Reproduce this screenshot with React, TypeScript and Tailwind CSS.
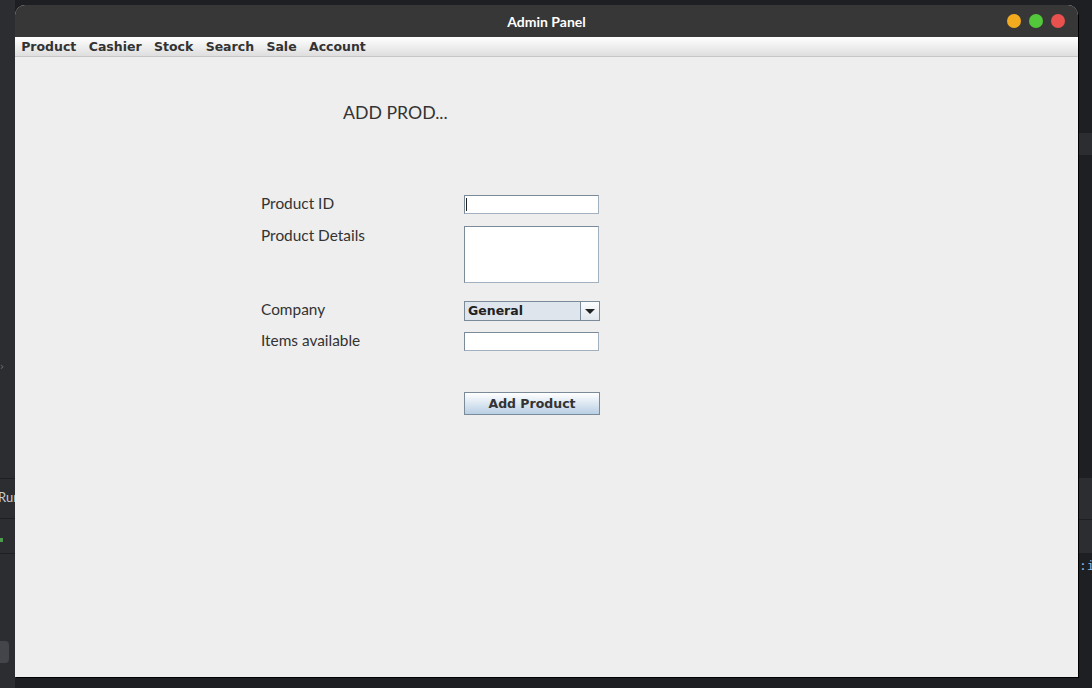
import React from "react";

const sans = { fontFamily: "Lato, 'Open Sans', sans-serif" };
const dejavu = { fontFamily: "'DejaVu Sans', sans-serif" };

function TextField({ h = 19, caret = false }: { h?: number; caret?: boolean }) {
  return (
    <div
      className="w-[135px] bg-white border border-[#7a8a99] border-b-[#a3b0bd] border-r-[#a3b0bd] relative"
      style={{ height: h }}
    >
      {caret && <div className="absolute left-[1px] top-[2px] w-[1px] h-[13px] bg-[#222]" />}
    </div>
  );
}

export default function App() {
  const menus = ["Product", "Cashier", "Stock", "Search", "Sale", "Account"];
  return (
    <div className="relative w-[1092px] h-[688px] bg-[#1e1f22] overflow-hidden">
      {/* IDE background pieces */}
      <div className="absolute left-0 top-0 w-[15px] h-[688px] bg-[#2b2d30] overflow-hidden">
        <div className="absolute left-0 top-[362px] text-[#6f737a] text-[10px] leading-none" style={dejavu}>›</div>
        <div className="absolute left-0 top-[478px] w-[15px] h-[1px] bg-[#1e1f22]" />
        <div className="absolute left-[-2px] top-[491px] text-[#c9ccd1] text-[13px] leading-none" style={sans}>Rur</div>
        <div className="absolute left-0 top-[518px] w-[15px] h-[1px] bg-[#1e1f22]" />
        <div className="absolute left-0 top-[538px] w-[3px] h-[4px] bg-[#4d9b4d]" />
        <div className="absolute left-0 top-[553px] w-[15px] h-[1px] bg-[#1e1f22]" />
        <div className="absolute left-0 top-[641px] w-[9px] h-[22px] rounded-r bg-[#43454a]" />
      </div>
      <div className="absolute left-[1078px] top-[133px] w-[14px] h-[22px] bg-[#2b2d30]" />
      <div className="absolute left-[1078px] top-[478px] w-[14px] h-[41px] bg-[#2b2d30]" />
      <div className="absolute left-[1078px] top-[520px] w-[14px] h-[33px] bg-[#2b2d30]" />
      <div className="absolute left-[1079px] top-[559px] text-[#8fb6e0] text-[13px] leading-none" style={{ fontFamily: "'DejaVu Sans Mono', monospace" }}>:i</div>

      {/* Window */}
      <div className="absolute left-[15px] top-[5px] w-[1063px] h-[672px] flex flex-col bg-[#eeeeee] rounded-t-[10px] overflow-hidden shadow-[1px_1px_0_#000]">
        <div className="h-[32px] bg-[#373737] relative flex items-center justify-center">
          <span className="text-white text-[14px] font-bold" style={sans}>Admin Panel</span>
          <div className="absolute right-[13px] top-[9px] flex gap-[8px]">
            <div className="w-[14px] h-[14px] rounded-full bg-[#f2ab1f]" />
            <div className="w-[14px] h-[14px] rounded-full bg-[#52c83a]" />
            <div className="w-[14px] h-[14px] rounded-full bg-[#e9514f]" />
          </div>
        </div>
        <div className="h-[20px] bg-gradient-to-b from-white to-[#dedede] border-b border-[#c6c6c6] flex items-center pt-[2px]">
          {menus.map((m) => (
            <span key={m} className="px-[6.2px] text-[12.5px] font-bold text-[#333] leading-none" style={dejavu}>
              {m}
            </span>
          ))}
        </div>
        <div className="flex-1 pl-[246px] pt-[46px]" style={sans}>
          <div className="ml-[82px] h-[20px] leading-[20px] text-[17.7px] text-[#333]">ADD PROD...</div>
          <div className="mt-[72px] flex items-center h-[19px]">
            <div className="w-[203px] text-[15.4px] text-[#333] -mt-[1px]">Product ID</div>
            <TextField caret />
          </div>
          <div className="mt-[12px] flex items-start">
            <div className="w-[203px] text-[15.4px] text-[#333] leading-[19px]">Product Details</div>
            <TextField h={57} />
          </div>
          <div className="mt-[18px] flex items-start">
            <div className="w-[203px] text-[15.4px] text-[#333] leading-[17px]">Company</div>
            <div className="w-[136px] h-[20px] border border-[#7a8a99] bg-[#dfe5ec] flex">
              <div className="flex-1 flex items-center pl-[3px] text-[12.5px] font-bold text-[#222]" style={dejavu}>
                General
              </div>
              <div className="w-[19px] border-l border-[#7a8a99] bg-gradient-to-b from-[#fbfcfd] to-[#e2e8ee] flex items-center justify-center">
                <div className="w-0 h-0 border-l-[5px] border-r-[5px] border-t-[5px] border-l-transparent border-r-transparent border-t-[#222]" />
              </div>
            </div>
          </div>
          <div className="mt-[11px] flex items-center h-[19px]">
            <div className="w-[203px] text-[15.4px] text-[#333] -mt-[1px]">Items available</div>
            <TextField />
          </div>
          <div className="mt-[41px] ml-[203px] w-[136px] h-[23px] border border-[#7a8a99] bg-gradient-to-b from-white to-[#b9cfe4] flex items-center justify-center text-[12.5px] font-bold text-[#333] pt-[1px]" style={dejavu}>
            Add Product
          </div>
        </div>
      </div>
    </div>
  );
}
